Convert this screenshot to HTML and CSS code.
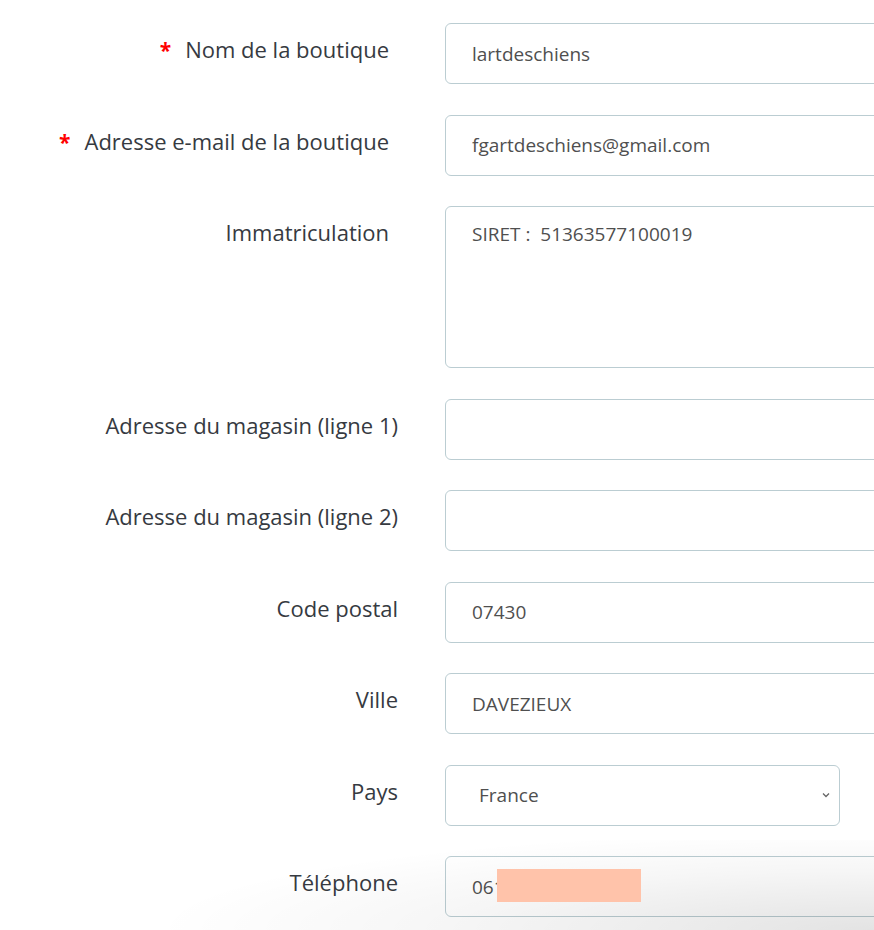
FILE: index.html
```html
<!DOCTYPE html>
<html lang="fr">
<head>
<meta charset="utf-8">
<title>Boutique</title>
<link rel="stylesheet" href="styles.css">
</head>
<body>
<form class="form">
  <div class="row">
    <label class="label label-narrow"><span class="req">*</span>Nom de la boutique</label>
    <div class="field"><input class="input" type="text" value="lartdeschiens"></div>
  </div>
  <div class="row">
    <label class="label label-narrow"><span class="req">*</span>Adresse e-mail de la boutique</label>
    <div class="field"><input class="input" type="text" value="fgartdeschiens@gmail.com"></div>
  </div>
  <div class="row">
    <label class="label label-narrow">Immatriculation</label>
    <div class="field"><textarea class="input textarea">SIRET :  51363577100019</textarea></div>
  </div>
  <div class="row">
    <label class="label">Adresse du magasin (ligne 1)</label>
    <div class="field"><input class="input" type="text" value=""></div>
  </div>
  <div class="row">
    <label class="label">Adresse du magasin (ligne 2)</label>
    <div class="field"><input class="input" type="text" value=""></div>
  </div>
  <div class="row">
    <label class="label">Code postal</label>
    <div class="field"><input class="input" type="text" value="07430"></div>
  </div>
  <div class="row">
    <label class="label">Ville</label>
    <div class="field"><input class="input" type="text" value="DAVEZIEUX"></div>
  </div>
  <div class="row">
    <label class="label">Pays</label>
    <div class="field">
      <div class="select-wrap">
        <select class="input select"><option>France</option></select>
        <svg class="chevron" width="8" height="6" viewBox="0 0 8 6"><path d="M1 1.5 L4 4.5 L7 1.5" fill="none" stroke="#666" stroke-width="1.3"/></svg>
      </div>
    </div>
  </div>
  <div class="row">
    <label class="label">Téléphone</label>
    <div class="field">
      <div class="phone-wrap">
        <input class="input" type="text" value="061">
      </div>
    </div>
  </div>
</form>
<div class="shade"></div>
<span class="redact"></span>
</body>
</html>
```

FILE: styles.css
```css
html, body {
  margin: 0;
  padding: 0;
  background: #fff;
  overflow: hidden;
}
body {
  font-family: "Open Sans", "Noto Sans", sans-serif;
  width: 874px;
  height: 930px;
  position: relative;
}
.form {
  display: flex;
  flex-direction: column;
  gap: 30.5px;
  padding-top: 23px;
}
.row {
  display: grid;
  grid-template-columns: 398px 560px;
  column-gap: 47px;
  align-items: start;
}
.label {
  text-align: right;
  font-size: 22px;
  line-height: 28px;
  color: #363a41;
  padding-top: 12px;
  white-space: nowrap;
}
.label-narrow {
  padding-right: 9px;
}
.req {
  color: #f00;
  font-weight: 700;
  font-size: 21px;
  margin-right: 14px;
}
.field {
  display: flex;
}
.input {
  box-sizing: border-box;
  width: 560px;
  height: 61px;
  border: 1px solid #bbcdd2;
  border-radius: 6px;
  padding: 0 26px;
  font-family: "Open Sans", "Noto Sans", sans-serif;
  font-size: 19px;
  color: #4f4f4f;
  background: #fff;
  outline: none;
}
.textarea {
  height: 162px;
  padding-top: 14px;
  resize: none;
  line-height: 26px;
  display: block;
}
.select-wrap {
  position: relative;
  width: 395px;
}
.select {
  width: 395px;
  -webkit-appearance: none;
  appearance: none;
  padding-left: 33px;
}
.chevron {
  position: absolute;
  right: 10px;
  top: 27px;
}
.phone-wrap {
  position: relative;
}
.redact {
  position: absolute;
  left: 497px;
  top: 869px;
  width: 144px;
  height: 33px;
  background: #ffc3aa;
}
.shade {
  position: absolute;
  left: 0;
  right: 0;
  bottom: 0;
  height: 90px;
  pointer-events: none;
  background: radial-gradient(ellipse 720px 100px at 100% 100%, rgba(0,0,0,0.11), rgba(0,0,0,0.035) 60%, rgba(0,0,0,0) 100%);
}
```
